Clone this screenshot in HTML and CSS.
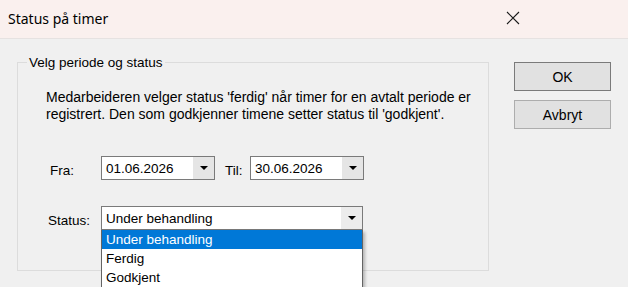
FILE: index.html
```html
<!DOCTYPE html>
<html lang="no">
<head>
<meta charset="utf-8">
<title>Status på timer</title>
<link rel="stylesheet" href="styles.css">
</head>
<body>
<div class="titlebar">
  <span class="title">Status på timer</span>
  <svg class="close" width="14" height="14" viewBox="0 0 14 14"><path d="M1 1 L13 13 M13 1 L1 13" stroke="#1a1a1a" stroke-width="1.1" fill="none"/></svg>
</div>
<div class="content">
  <div class="group">
    <span class="legend">Velg periode og status</span>
    <p class="desc">Medarbeideren velger status 'ferdig' når timer for en avtalt periode er<br>registrert. Den som godkjenner timene setter status til 'godkjent'.</p>
    <div class="row dates">
      <span class="lbl lbl-fra">Fra:</span>
      <div class="combo date"><span class="val">01.06.2026</span><span class="btn"><span class="arrow"></span></span></div>
      <span class="lbl lbl-til">Til:</span>
      <div class="combo date"><span class="val">30.06.2026</span><span class="btn"><span class="arrow"></span></span></div>
    </div>
    <div class="row status">
      <span class="lbl lbl-status">Status:</span>
      <div class="combo wide">
        <span class="val">Under behandling</span><span class="btn light"><span class="arrow"></span></span>
        <ul class="list">
          <li class="sel">Under behandling</li>
          <li>Ferdig</li>
          <li>Godkjent</li>
        </ul>
      </div>
    </div>
  </div>
  <div class="buttons">
    <div class="button default">OK</div>
    <div class="button">Avbryt</div>
  </div>
</div>
</body>
</html>
```

FILE: styles.css
```css
html, body {
  margin: 0;
  padding: 0;
  background: #f0f0f0;
  width: 628px;
  height: 287px;
  overflow: hidden;
  font-family: "Liberation Sans", Arial, sans-serif;
  font-size: 13.5px;
  color: #000;
}

.titlebar {
  height: 38px;
  background: #faf0ee;
  border-bottom: 1px solid #e6e2e1;
  display: flex;
  align-items: center;
  justify-content: space-between;
  padding: 0 8px 0 8px;
}

.title {
  font-family: "Noto Sans", "Open Sans", sans-serif;
  font-size: 14px;
  color: #000;
  margin-top: -1px;
}

.close {
  margin-right: 100px;
  margin-top: -2px;
}

.content {
  display: flex;
  padding: 23px 0 0 17px;
}

.group {
  position: relative;
  width: 470px;
  height: 207px;
  border: 1px solid #dcdcdc;
}

.legend {
  position: absolute;
  top: -8px;
  left: 9px;
  padding: 0 2px;
  background: #f0f0f0;
  line-height: 15px;
}

.desc {
  margin: 26px 0 0 28px;
  font-size: 14px;
  line-height: 17px;
}

.row {
  display: flex;
  align-items: center;
}

.dates {
  margin-top: 33px;
}

.status {
  margin-top: 26px;
}

.lbl {
  display: block;
  padding-top: 5px;
}

.lbl-fra {
  margin-left: 32px;
  width: 51px;
}

.lbl-til {
  margin-left: 10px;
  width: 25px;
}

.lbl-status {
  margin-left: 30px;
  width: 53px;
}

.combo {
  position: relative;
  height: 22px;
  border: 1px solid #7a7a7a;
  background: #fff;
  display: flex;
  align-items: center;
  justify-content: space-between;
  box-sizing: content-box;
}

.combo.date {
  width: 112px;
}

.combo.wide {
  width: 260px;
}

.val {
  padding-left: 4px;
}

.btn {
  width: 21px;
  height: 100%;
  background: #e5e5e5;
  display: flex;
  align-items: center;
  justify-content: center;
}

.btn.light {
  background: #ececec;
}

.arrow {
  width: 0;
  height: 0;
  border-left: 4px solid transparent;
  border-right: 4px solid transparent;
  border-top: 4px solid #000;
}

.list {
  position: absolute;
  top: 23px;
  left: -1px;
  width: 260px;
  margin: 0;
  padding: 0;
  list-style: none;
  background: #fff;
  border: 1px solid #646464;
  border-top: none;
  box-shadow: 2px 2px 3px rgba(0, 0, 0, 0.25);
  z-index: 2;
}

.list li {
  height: 19px;
  line-height: 19px;
  padding-left: 4px;
}

.list li.sel {
  background: #0078d7;
  color: #fff;
}

.buttons {
  display: flex;
  flex-direction: column;
  gap: 9px;
  margin-left: 25px;
}

.button {
  width: 95px;
  height: 27px;
  border: 1px solid #adadad;
  background: #e1e1e1;
  display: flex;
  align-items: center;
  justify-content: center;
  font-size: 14px;
}

.button.default {
  border-color: #7a7a7a;
}
```
